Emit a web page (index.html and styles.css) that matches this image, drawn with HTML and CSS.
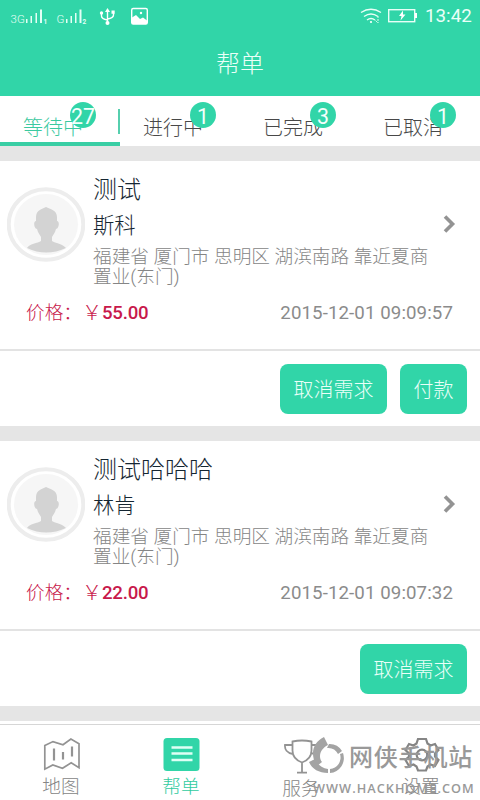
FILE: index.html
```
<!DOCTYPE html>
<html lang="zh-CN">
<head>
<meta charset="utf-8">
<title>帮单</title>
<link rel="stylesheet" href="styles.css">
</head>
<body>
<svg class="defs" width="0" height="0">
  <symbol id="avatar" viewBox="0 0 78 78">
    <ellipse cx="39" cy="37.500" rx="37.300" ry="35.300" fill="#fff" stroke="#ededed" stroke-width="4"/>
    <ellipse cx="39" cy="37.500" rx="32" ry="30.500" fill="#f6f6f6"/>
    <path d="M39 20c4 2 11 3 11 10v4c3 0 2 8-1 8-1 4-3 6-4 8v4c3 2 11 3 14 7q-20 9-39 0c2-4 11-5 14-7v-4c-1-2-3-4-4-8-3 0-4-8-1-8v-4c0-7 6-8 10-10z" fill="#d3d3d3"/>
  </symbol>
  <symbol id="chevron" viewBox="0 0 14 20">
    <path d="M3 2.500 10.500 10 3 17.500" fill="none" stroke="#939393" stroke-width="3.600"/>
  </symbol>
</svg>
<header class="header">
  <div class="status">
    <svg class="status-icons" width="150" height="30" viewBox="0 0 150 30">
      <g fill="#e4fff5">
        <text x="10.500" y="21.500" font-size="11.500">3G</text>
        <path d="M26 18h1.500v4H26zM30.500 15H32v7h-1.500zM35.500 12H37v10h-1.500zM40 8.500h2V22h-2z"/>
        <text x="43.500" y="23" class="sim">1</text>
        <text x="56.500" y="21.500" font-size="11.500">G</text>
        <path d="M66 18h1.500v4H66zM70.500 15H72v7h-1.500zM75 12h1.500v10H75zM79.500 8.500h2V22h-2z"/>
        <text x="82.500" y="23" class="sim">2</text>
      </g>
      <g fill="none" stroke="#fff" stroke-width="1.400">
        <path d="M107.500 10v13M101.500 12v3q0 3 6 4M113.500 12v2q0 3-6 4"/>
      </g>
      <g fill="#fff"><path d="m107.500 7 2.500 4h-5zM111.500 9.500h3.200v3.200h-3.200z"/><circle cx="101.500" cy="12" r="1.700"/><circle cx="107.500" cy="22" r="2"/></g>
      <rect x="131.700" y="7.500" width="15.600" height="15.500" rx="1.500" fill="none" stroke="#fff" stroke-width="1.400"/>
      <path d="M132 16.500l4-2.500 4 4 3-1.500 4 3v3.500h-15z" fill="#fff"/><circle cx="141" cy="12" r="1.200" fill="#fff"/>
    </svg>
    <svg class="power" width="60" height="30" viewBox="0 0 60 30">
      <g fill="none" stroke="#e8fff7" stroke-width="1.400">
        <path d="M1 11.500Q11 5 21 11.500M4 15.500q7-5 14 0M7 19q4-3 8 0"/>
        <rect x="28.700" y="8.700" width="26" height="12"/>
      </g>
      <circle cx="11" cy="21" r="1.100" fill="#fff"/>
      <path d="M18 15v7m-2.500-2.500 2.500 2.500" stroke="#d8fff0" stroke-dasharray="2 1" fill="none"/>
      <path d="M55 12h2v5h-2zM43 9.500l-4 5.500h2.500l-1 4.500 5-6h-2.500z" fill="#fff"/>
    </svg>
    <span class="clock">13:42</span>
  </div>
  <h1 class="title">帮单</h1>
</header>
<nav class="tabs">
  <a class="tab active">等待中<b class="badge">27</b></a>
  <a class="tab">进行中<b class="badge">1</b></a>
  <a class="tab">已完成<b class="badge">3</b></a>
  <a class="tab">已取消<b class="badge">1</b></a>
</nav>
<main class="list">
  <article class="card">
    <div class="info">
      <svg class="avatar"><use href="#avatar"/></svg>
      <div class="details">
        <h2>测试</h2>
        <h3>斯科</h3>
        <p>福建省 厦门市 思明区 湖滨南路 靠近夏商置业(东门)</p>
      </div>
      <svg class="chevron"><use href="#chevron"/></svg>
    </div>
    <div class="meta"><span class="label">价格：</span><span class="yen">￥</span><span class="amount">55.00</span><time>2015-12-01 09:09:57</time></div>
    <div class="actions"><button>取消需求</button><button>付款</button></div>
  </article>
  <article class="card">
    <div class="info">
      <svg class="avatar"><use href="#avatar"/></svg>
      <div class="details">
        <h2>测试哈哈哈</h2>
        <h3>林肯</h3>
        <p>福建省 厦门市 思明区 湖滨南路 靠近夏商置业(东门)</p>
      </div>
      <svg class="chevron"><use href="#chevron"/></svg>
    </div>
    <div class="meta"><span class="label">价格：</span><span class="yen">￥</span><span class="amount">22.00</span><time>2015-12-01 09:07:32</time></div>
    <div class="actions"><button>取消需求</button></div>
  </article>
</main>
<footer class="bottom">
  <a class="item">
    <svg width="40" height="36" viewBox="0 0 40 36" fill="none" stroke="#939393" stroke-width="1.700"><path d="M3.800 9.500 12 5.600l10 3.200L29.900 3l8.100 4.700v24.100l-7.800-5-8.700 5.500-9.700-3.400-8 4.300z"/><path d="M13 12.500v12M22 16v7.500M31 10.500v10" stroke-width="2.200"/></svg>
    <span>地图</span>
  </a>
  <a class="item current">
    <svg width="40" height="36" viewBox="0 0 40 36"><rect x="2.500" y="2" width="36" height="33" rx="3.500" fill="#31d5a8"/><path d="M10.500 11.500h21M10.500 17.500h21M10.500 24h21" stroke="#dffff5" stroke-width="2.300"/></svg>
    <span>帮单</span>
  </a>
  <a class="item low">
    <svg width="40" height="38" viewBox="0 0 40 38" fill="none" stroke="#939393" stroke-width="1.800"><path d="M11.500 5.500q9.500-2 19 0v9c0 6-4 10-9.500 12-5.500-2-9.500-6-9.500-12zM11.500 9H4c-.5 4 2 8 8 9M30.500 9h7c.5 4-2 8-8 9M21 26.500v9.500M16 36.700h10"/></svg>
    <span>服务</span>
  </a>
  <a class="item">
    <svg width="40" height="36" viewBox="0 0 40 36" fill="none" stroke="#858585" stroke-width="2.200"><path d="M17 3h8l1.500 4.500 3 2L34 8l3.500 6-3.500 3.500v3l3.500 3.500-3.500 6-4.500-1.500-3 2L25 34.500h-8l-1.500-4-3-2L8 30l-3.500-6L8 20.500v-3L4.500 14 8 8l4.500 1.500 3-2z"/><circle cx="21" cy="19" r="5.300"/></svg>
    <span>设置</span>
  </a>
  <div class="watermark">
    <svg width="40" height="42" viewBox="0 0 40 42" fill="#a3a3a3"><path d="M15 1l4 8c-8 4-10 12-6 17l-5 4C1 19 3 7 15 1z"/><path d="M20 8a14.500 14.500 0 0 1 13 7l-4 3a11 11 0 0 0-11-6z"/><path d="M34 17a15 15 0 0 1-13 20v-4a11.500 11.500 0 0 0 10-15z"/><path d="M0 26l6-3c3 6 7 9 13 10v4C10 37 3 33 0 26z"/></svg>
    <span class="brand">网侠手机站</span>
    <span class="site">WWW.HACKHOME.COM</span>
  </div>
</footer>
</body>
</html>
```
FILE: styles.css
```
* { box-sizing: border-box; }
body {
  margin: 0;
  width: 480px;
  height: 800px;
  overflow: hidden;
  display: flex;
  flex-direction: column;
  background: #fff;
  font-family: Roboto, "Noto Sans CJK SC", sans-serif;
  font-weight: 300;
}
h1, h2, h3, p { margin: 0; font-weight: 300; }
.defs { position: absolute; }
.header { height: 96px; flex: none; background: #31d5a8; color: #eafff8; }
.status { height: 32px; display: flex; align-items: center; }
.status-icons { font-family: Roboto, sans-serif; }
.sim { font-size: 6.5px; font-weight: 700; }
.power { margin-left: 210px; }
.clock { margin: 0 0 0 5px; font-size: 18.8px; font-weight: 400; }
.title { text-align: center; font-size: 24px; line-height: 65px; }
.tabs { height: 50px; flex: none; display: grid; grid-template: 50px / repeat(4, 120px); }
.tab {
  position: relative;
  height: 50px;
  padding: 18px 0 0 23px;
  font-size: 20px;
  line-height: 28px;
  color: #484848;
}
.active { color: #3bc9a0; border-bottom: 4px solid #39cea4; }
.active::after {
  content: "";
  position: absolute;
  right: 0;
  top: 13px;
  width: 2px;
  height: 25px;
  background: #56cfae;
}
.badge {
  position: absolute;
  left: 70px;
  top: 6px;
  width: 26px;
  height: 26px;
  border-radius: 50%;
  background: #31d5a8;
  color: #f3fffb;
  font-size: 21.33px;
  font-weight: 400;
  line-height: 30px;
  display: flex;
  justify-content: center;
}
.list { flex: none; border-top: 15px solid #e5e5e5; }
.card { height: 280px; border-bottom: 15px solid #e5e5e5; }
.info { height: 130px; display: flex; }
.avatar { width: 78px; height: 78px; margin: 26px 8px 0 7px; flex: none; }
.details { width: 342px; padding-top: 13px; }
h2 { font-size: 24px; line-height: 32px; color: #152632; }
h3 { margin-top: 5px; font-size: 21.33px; line-height: 30px; color: #152632; }
.details p { margin-top: 6px; font-size: 18.67px; line-height: 20px; color: #858585; }
.chevron { width: 14px; height: 20px; margin: 53px 0 0 7px; }
.meta {
  height: 60px;
  padding: 7px 27px 0 26px;
  display: flex;
  font-size: 18.67px;
  line-height: 30px;
  color: #c8194b;
  border-bottom: 2px solid #e3e3e3;
}
.label { width: 57px; white-space: nowrap; }
.yen { width: 19px; font-size: 20px; text-indent: -1px; }
.amount { font-weight: 500; letter-spacing: -0.25px; }
time { margin-left: auto; font-weight: 400; color: #8b8b8b; letter-spacing: 0.1px; }
.actions { padding: 13px 13px 0; display: flex; justify-content: flex-end; gap: 13px; }
button {
  height: 50px;
  padding: 2px 13.5px 0;
  border: 0;
  border-radius: 8px;
  background: #31d5a8;
  color: #eafff8;
  font: inherit;
  font-size: 20px;
  line-height: 48px;
}
.bottom {
  position: relative;
  height: 76px;
  margin-top: auto;
  flex: none;
  display: grid;
  grid-template-columns: repeat(4, 120px);
  border-top: 1px solid #d6d6d6;
}
.item {
  padding: 11px 0 0 1px;
  display: flex;
  flex-direction: column;
  align-items: center;
  font-size: 18.67px;
  line-height: 26px;
  color: #858585;
}
.item span { margin: 2px 0 0 1px; }
.current { color: #31cba0; }
.watermark {
  position: absolute;
  left: 309px;
  top: 11px;
  width: 170px;
  display: grid;
  grid-template-columns: 40px 1fr;
  color: #999;
}
.brand { font-size: 24px; font-weight: 500; line-height: 44px; height: 42px; letter-spacing: 0.8px; white-space: nowrap; }
.site { grid-column: 1 / 3; margin-left: 4px; font: 600 12.7px/20px "Open Sans", sans-serif; letter-spacing: 1.05px; }
```
